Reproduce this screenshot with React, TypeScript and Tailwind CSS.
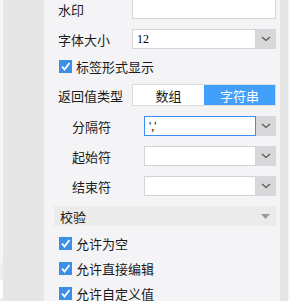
import React from "react";

const Chevron = () => (
  <svg width="10" height="6" viewBox="0 0 10 6" fill="none">
    <path d="M1 1 L5 4.5 L9 1" stroke="#555" strokeWidth="1.2" />
  </svg>
);

const Check = () => (
  <div className="w-[13px] h-[13px] bg-[#3c8fe6] flex items-center justify-center shrink-0">
    <svg width="11" height="11" viewBox="0 0 11 11" fill="none">
      <path d="M2 5.5 L4.5 8.5 L9.5 2" stroke="#fff" strokeWidth="1.8" />
    </svg>
  </div>
);

const SelectBox = ({ value, focused, w }: { value?: string; focused?: boolean; w: string }) => (
  <div className={`flex h-[20px] ${w}`}>
    <div
      className={`flex-1 h-full bg-white border flex items-center pl-[4px] text-[12px] text-black ${
        focused ? "border-[#3d8ef0]" : "border-[#d4d4d6]"
      }`}
      style={{ fontFamily: "'Liberation Serif', serif" }}
    >
      {value}
    </div>
    <div className="w-[20px] h-full bg-[#d8d8db] flex items-center justify-center">
      <Chevron />
    </div>
  </div>
);

export default function App() {
  return (
    <div
      className="flex w-[290px] h-[301px] overflow-hidden text-[13px] text-[#1a1a1a]"
      style={{ fontFamily: "'Noto Sans CJK SC', sans-serif" }}
    >
      <div className="w-[3px] flex flex-col bg-[#f6f6f4]">
        <div className="h-[263px]" />
        <div className="h-[17px] bg-[#efefec]" />
        <div className="h-[18px] bg-white" />
        <div className="flex-1 bg-[#f0f0f0]" />
      </div>
      <div className="w-[41px] bg-[#e6e6e6]" />
      <div className="w-[236px] bg-[#f4f4f6] flex flex-col pr-[4px]">
        <div className="flex items-center h-[20px] mt-[-1px] pl-[14px]">
          <div className="w-[74px] leading-none">水印</div>
          <div className="w-[144px] h-[20px] bg-white border border-[#d4d4d6]" />
        </div>
        <div className="flex items-center h-[20px] mt-[10px] pl-[14px]">
          <div className="w-[74px] leading-none">字体大小</div>
          <SelectBox value="12" w="w-[144px]" />
        </div>
        <div className="flex items-center h-[20px] mt-[7px] pl-[15px] gap-[4px]">
          <Check />
          <div className="leading-none">标签形式显示</div>
        </div>
        <div className="flex items-center h-[22px] mt-[8px] pl-[14px]">
          <div className="w-[74px] leading-none">返回值类型</div>
          <div className="w-[144px] h-[22px] flex border border-[#dcdcde]">
            <div className="flex-1 bg-white flex items-center justify-center leading-none">数组</div>
            <div className="flex-1 bg-[#429ffa] text-white flex items-center justify-center leading-none">字符串</div>
          </div>
        </div>
        <div className="flex items-center h-[20px] mt-[10px] pl-[28px]">
          <div className="w-[72px] leading-none">分隔符</div>
          <SelectBox value="','" focused w="w-[132px]" />
        </div>
        <div className="flex items-center h-[20px] mt-[10px] pl-[28px]">
          <div className="w-[72px] leading-none">起始符</div>
          <SelectBox w="w-[132px]" />
        </div>
        <div className="flex items-center h-[20px] mt-[10px] pl-[28px]">
          <div className="w-[72px] leading-none">结束符</div>
          <SelectBox w="w-[132px]" />
        </div>
        <div className="flex items-center justify-between h-[20px] mt-[10px] ml-[10px] bg-[#ebebec] pl-[6px] pr-[6px]">
          <div className="leading-none">校验</div>
          <svg width="9" height="5" viewBox="0 0 9 5">
            <path d="M0 0 H9 L4.5 5 Z" fill="#9a9a9a" />
          </svg>
        </div>
        <div className="flex flex-col gap-[12px] mt-[11px] pl-[15px]">
          <div className="flex items-center h-[13px] gap-[4px]">
            <Check />
            <div className="leading-none">允许为空</div>
          </div>
          <div className="flex items-center h-[13px] gap-[4px]">
            <Check />
            <div className="leading-none">允许直接编辑</div>
          </div>
          <div className="flex items-center h-[13px] gap-[4px]">
            <Check />
            <div className="leading-none">允许自定义值</div>
          </div>
        </div>
      </div>
      <div className="w-[8px] bg-[#e6e6e6]" />
      <div className="flex-1 bg-[#f6f6f6]" />
    </div>
  );
}
